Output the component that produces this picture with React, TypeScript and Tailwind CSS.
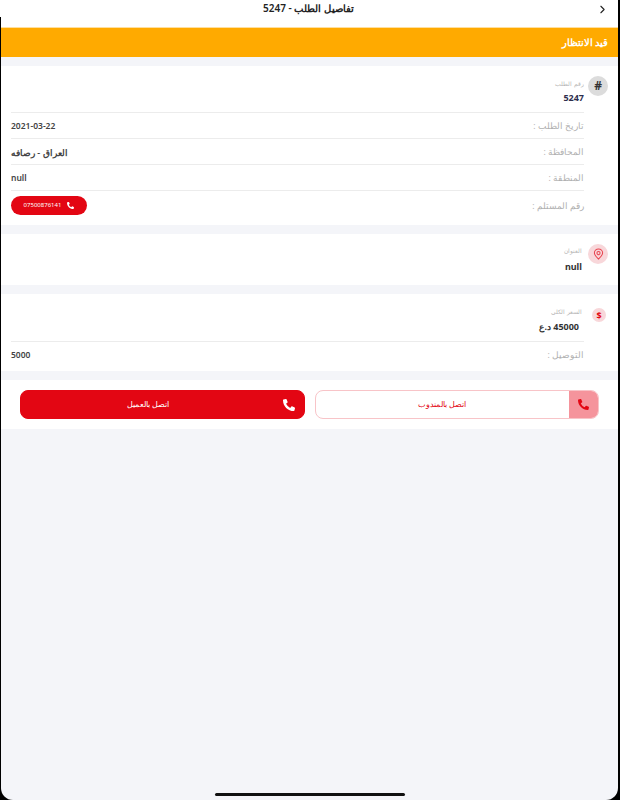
import { ChevronRight } from 'lucide-react'
import { FaPhoneAlt } from 'react-icons/fa'

const font = 'font-["Noto_Sans","Noto_Sans_CJK_SC",sans-serif]'

function PinIcon() {
  return (
    <svg width="11" height="12" viewBox="0 0 24 26" fill="none" stroke="#e8434e" strokeWidth="2.2">
      <path d="M12 24c-5-4.500-9-8.500-9-13a9 9 0 0 1 18 0c0 4.500-4 8.500-9 13z" />
      <circle cx="12" cy="11" r="3.500" />
    </svg>
  )
}

function InfoRow({ label, value, valueSize = 'text-[8.500px]' }: { label: string; value: string; valueSize?: string }) {
  return (
    <div className="flex h-[26px] items-center justify-between border-t border-[#ececec] pt-[2px]">
      <span className="text-[8.500px] text-[#b0b0b0]">{label}</span>
      <span className={`${valueSize} font-semibold text-[#444]`} dir="ltr">{value}</span>
    </div>
  )
}

function CallButton({ label, solid }: { label: string; solid?: boolean }) {
  return (
    <button
      type="button"
      className={`flex h-[29px] flex-1 overflow-hidden rounded-[8px] border ${
        solid ? 'border-[#e30613] bg-[#e30613] text-white' : 'border-[#f8c4c8] bg-white text-[#e30613]'
      }`}
    >
      <span className={`flex h-full w-[29px] shrink-0 items-center justify-center ${solid ? '' : 'bg-[#f5949c]'}`}>
        <FaPhoneAlt size={solid ? 12 : 11} />
      </span>
      <span className="flex h-full flex-1 items-center justify-center pt-px text-[7.500px]">{label}</span>
    </button>
  )
}

export default function App() {
  return (
    <div className="relative h-[800px] w-[620px] overflow-hidden bg-black pl-px pr-[2px]">
      <div className="absolute left-0 top-0 h-[17px] w-px bg-white" />
      <div className={`${font} flex h-full flex-col overflow-hidden rounded-b-[12px] bg-[#f4f5f9]`} dir="rtl">
        <header className="flex h-[28px] shrink-0 items-start border-b border-[#ffdf9e] bg-white pr-[9px] pt-[2px]">
          <ChevronRight size={13} strokeWidth={2} className="mt-px text-[#222]" />
          <h1 className="flex-1 pl-[20px] text-center text-[10px] font-semibold leading-[13px] text-[#222]">تفاصيل الطلب - 5247</h1>
        </header>

        <div className="flex h-[29px] shrink-0 items-center bg-[#ffaa00] px-[10px] pt-[2px] text-[9.500px] font-semibold text-white">
          قيد الانتظار
        </div>

        <section className="mt-[9px] flex bg-white px-[10px] pb-[5px] pt-[10px]">
          <div className="ml-[4px] flex h-[20px] w-[20px] shrink-0 items-center justify-center rounded-full bg-[#dcdcdc] text-[12px] font-bold leading-none text-[#333]">
            #
          </div>
          <div className="flex-1">
            <div className="flex h-[36px] flex-col pt-[3px]">
              <span className="text-[6px] leading-[10px] text-[#b5b5b5]">رقم الطلب</span>
              <span className="mt-[3px] text-[9px] font-bold leading-[12px] text-[#2e2e4d]">5247</span>
            </div>
            <InfoRow label="تاريخ الطلب :" value="2021-03-22" />
            <InfoRow label="المحافظة :" value="العراق - رصافه" valueSize="text-[9px]" />
            <InfoRow label="المنطقة :" value="null" />
            <div className="flex h-[30px] items-center justify-between border-t border-[#ececec]">
              <span className="pt-px text-[8.500px] text-[#b0b0b0]">رقم المستلم :</span>
              <div className="flex h-[19px] w-[76px] items-center justify-center gap-[6px] rounded-full bg-[#e30613] text-white" dir="ltr">
                <span className="text-[6px]">07500876141</span>
                <FaPhoneAlt size={7} />
              </div>
            </div>
          </div>
        </section>

        <section className="mt-[9px] flex h-[51px] bg-white px-[10px] pt-[10px]">
          <div className="ml-[6px] flex h-[20px] w-[20px] shrink-0 items-center justify-center rounded-full bg-[#f8d7da]">
            <PinIcon />
          </div>
          <div className="flex flex-col pt-[2px]">
            <span className="text-[6px] leading-[10px] text-[#b5b5b5]">العنوان</span>
            <span className="mt-[5px] text-[9px] font-bold leading-[12px] text-[#333]">null</span>
          </div>
        </section>

        <section className="mt-[9px] bg-white px-[10px] pt-[10px]">
          <div className="flex h-[37px]">
            <div className="ml-[10px] mr-[2px] mt-[4px] flex h-[14px] w-[14px] shrink-0 items-center justify-center rounded-full bg-[#f8d7da] text-[9px] font-bold leading-none text-[#e30613]">
              $
            </div>
            <div className="flex flex-col pt-[3px]">
              <span className="text-[6px] leading-[10px] text-[#b5b5b5]">السعر الكلي</span>
              <span className="mr-[3px] mt-[4px] text-[9px] font-bold leading-[12px] text-[#333]">45000 د.ع</span>
            </div>
          </div>
          <div className="mr-[24px]">
            <div className="flex h-[30px] items-center justify-between border-t border-[#ececec] pb-[3px]">
              <span className="text-[8.500px] text-[#b0b0b0]">التوصيل :</span>
              <span className="text-[8.500px] font-semibold text-[#444]">5000</span>
            </div>
          </div>
        </section>

        <section className="mt-[9px] flex h-[49px] items-center gap-[10px] bg-white px-[19px]">
          <CallButton label="اتصل بالمندوب" />
          <CallButton label="اتصل بالعميل" solid />
        </section>

        <div className="mb-[4px] mt-auto flex justify-center">
          <div className="h-[3px] w-[190px] rounded-full bg-[#111]" />
        </div>
      </div>
    </div>
  )
}
